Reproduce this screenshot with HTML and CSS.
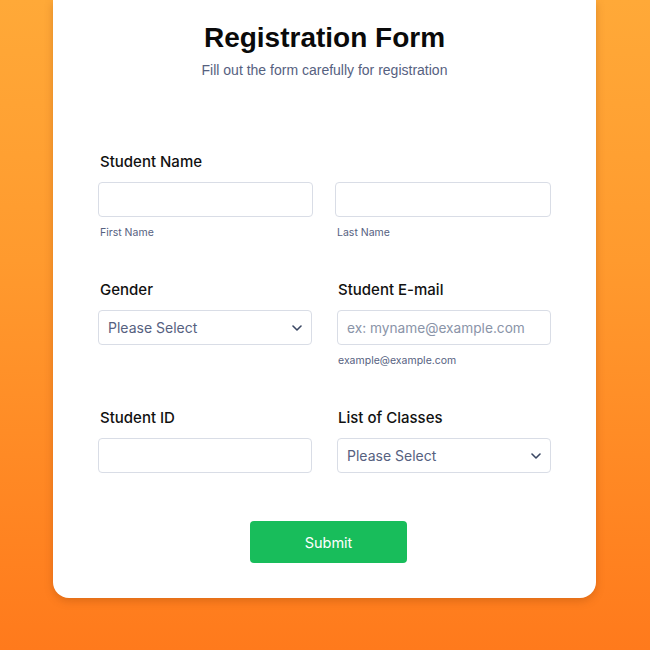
FILE: index.html
```html
<!DOCTYPE html>
<html lang="en">
<head>
<meta charset="utf-8">
<title>Registration Form</title>
<link rel="stylesheet" href="styles.css">
</head>
<body>
<main class="card">
  <header class="head">
    <h1 class="title">Registration Form</h1>
    <p class="subtitle">Fill out the form carefully for registration</p>
  </header>
  <form class="form">
    <div class="row row-name">
      <div class="field field-span">
        <div class="label">Student Name</div>
      </div>
      <div class="field">
        <div class="input"></div>
        <div class="hint">First Name</div>
      </div>
      <div class="field">
        <div class="input"></div>
        <div class="hint">Last Name</div>
      </div>
    </div>
    <div class="row">
      <div class="field">
        <div class="label">Gender</div>
        <div class="input select">
          <span class="value">Please Select</span>
          <svg class="chev" width="10" height="6" viewBox="0 0 10 6"><path d="M1 1l4 4 4-4" fill="none" stroke="#3a4763" stroke-width="1.6" stroke-linecap="round" stroke-linejoin="round"/></svg>
        </div>
      </div>
      <div class="field">
        <div class="label label-tight">Student E-mail</div>
        <div class="input"><span class="placeholder">ex: myname@example.com</span></div>
        <div class="hint hint-tight">example@example.com</div>
      </div>
    </div>
    <div class="row">
      <div class="field">
        <div class="label">Student ID</div>
        <div class="input"></div>
      </div>
      <div class="field">
        <div class="label label-tight">List of Classes</div>
        <div class="input select">
          <span class="value">Please Select</span>
          <svg class="chev" width="10" height="6" viewBox="0 0 10 6"><path d="M1 1l4 4 4-4" fill="none" stroke="#3a4763" stroke-width="1.6" stroke-linecap="round" stroke-linejoin="round"/></svg>
        </div>
      </div>
    </div>
    <div class="actions">
      <button type="button" class="submit">Submit</button>
    </div>
  </form>
</main>
</body>
</html>
```

FILE: styles.css
```css
* { box-sizing: border-box; }
html, body { height: 100%; }
body {
  margin: 0;
  background: linear-gradient(180deg, #ffa938 0%, #ff9a2e 40%, #ff7a1c 100%);
  font-family: Inter, "Noto Sans", sans-serif;
  overflow: hidden;
}
.card {
  margin-left: 53px;
  width: 543px;
  background: #fff;
  border-radius: 0 0 16px 16px;
  box-shadow: 0 3px 8px rgba(120, 50, 0, 0.25);
  padding: 21px 45px 35px;
}
.head { text-align: center; }
.title {
  margin: 0;
  font-family: "Liberation Sans", Arial, sans-serif;
  font-weight: 700;
  font-size: 28px;
  line-height: 34px;
  color: #0a0a0a;
}
.subtitle {
  margin: 6px 0 0;
  font-family: "Liberation Sans", Arial, sans-serif;
  font-size: 14px;
  line-height: 18px;
  color: #56617f;
}
.form {
  margin-top: 73px;
  display: flex;
  flex-direction: column;
  gap: 40px;
}
.row {
  display: grid;
  grid-template-columns: 214px 214px;
  justify-content: space-between;
}
.row-name {
  grid-template-columns: 215px 216px;
  column-gap: 22px;
  justify-content: start;
}
.field-span { grid-column: 1 / -1; }
.label {
  font-size: 15px;
  line-height: 20px;
  font-weight: 500;
  color: #111;
  padding-left: 2px;
  margin-bottom: 10px;
}
.label-tight { padding-left: 1px; }
.input {
  height: 35px;
  border: 1px solid #d9dde6;
  border-radius: 4px;
  background: #fff;
  display: flex;
  align-items: center;
  padding: 0 9px;
}
.select { justify-content: space-between; }
.value {
  font-size: 14px;
  color: #56617f;
}
.placeholder {
  font-size: 13.7px;
  color: #8a94a8;
}
.hint {
  margin-top: 9px;
  padding-left: 2px;
  font-size: 10.5px;
  line-height: 14px;
  color: #56617f;
}
.hint-tight { padding-left: 1px; }
.actions {
  display: flex;
  justify-content: center;
  padding-left: 8px;
  margin-top: 8px;
}
.submit {
  width: 157px;
  height: 42px;
  border: none;
  border-radius: 4px;
  background: #18bd5b;
  color: #fff;
  font-family: Inter, "Noto Sans", sans-serif;
  font-size: 14.5px;
  font-weight: 400;
}
```
